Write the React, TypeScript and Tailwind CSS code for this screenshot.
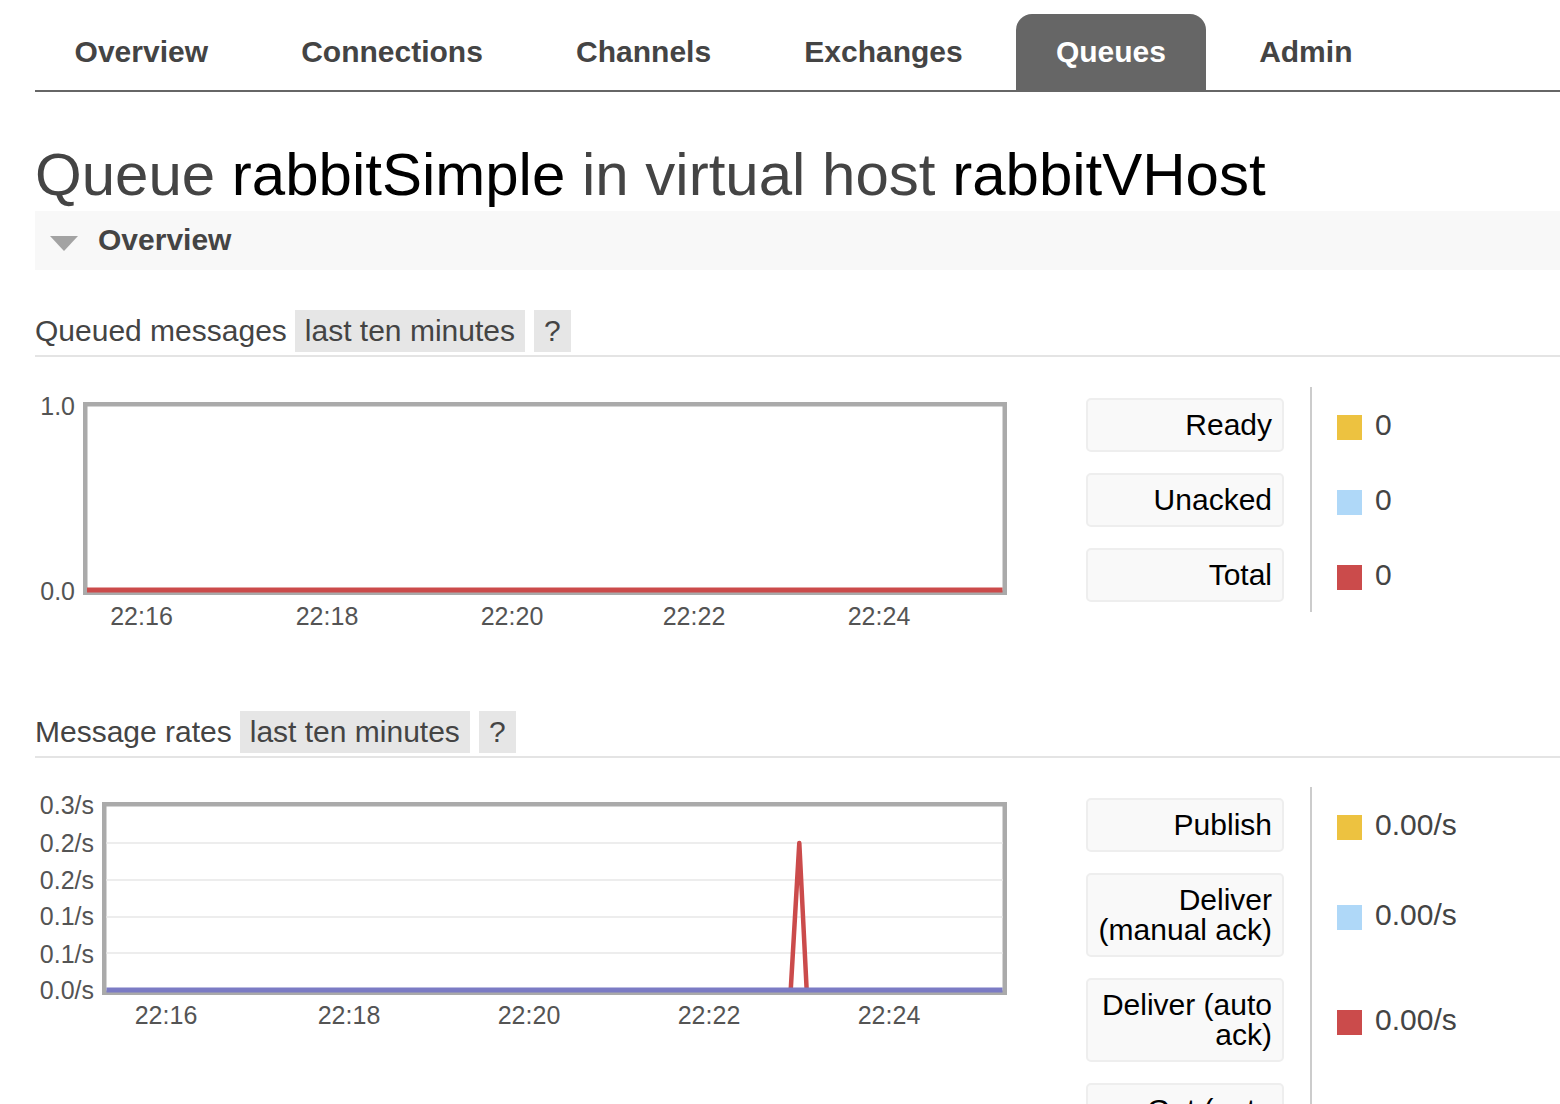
import React from "react";

const tabs = ["Overview", "Connections", "Channels", "Exchanges", "Queues", "Admin"];

interface LegendItem {
  label: string;
  value: string;
  color: string;
}

const queuedLegend: LegendItem[] = [
  { label: "Ready", value: "0", color: "#edc240" },
  { label: "Unacked", value: "0", color: "#afd8f8" },
  { label: "Total", value: "0", color: "#cb4b4b" },
];

const ratesLegend: LegendItem[] = [
  { label: "Publish", value: "0.00/s", color: "#edc240" },
  { label: "Deliver (manual ack)", value: "0.00/s", color: "#afd8f8" },
  { label: "Deliver (auto ack)", value: "0.00/s", color: "#cb4b4b" },
  { label: "Get (auto ack)", value: "0.00/s", color: "#4da74d" },
];

const SectionHeader = ({ title }: { title: string }) => (
  <div className="flex items-center gap-[8px] pb-[2px] border-b-2 border-[#e4e4e4] text-[30px] text-[#444]">
    <span>{title}</span>
    <span className="h-[42px] flex items-center px-[10px] bg-[#e6e6e6]">last ten minutes</span>
    <span className="h-[42px] flex items-center px-[10px] ml-[1px] bg-[#e6e6e6]">?</span>
  </div>
);

const Legend = ({ items }: { items: LegendItem[] }) => (
  <div className="grid grid-cols-[auto_auto] content-start">
    {items.map((it) => (
      <React.Fragment key={it.label}>
        <div className="py-[10.5px] pr-[26px] border-r-2 border-[#ccc]">
          <div className="w-[198px] rounded-[5px] border-2 border-[#eeeeee] bg-[#f9f9f9] px-[10px] py-[10px] text-right text-[30px] leading-[30px] text-black">
            {it.label}
          </div>
        </div>
        <div className="pl-[25px] flex items-center">
          <span className="w-[25px] h-[25px] mt-[5px] mr-[13px]" style={{ background: it.color }} />
          <span className="text-[30px] leading-[30px] text-[#444]">{it.value}</span>
        </div>
      </React.Fragment>
    ))}
  </div>
);

const labelFont = { fontFamily: "'Liberation Sans', Arial, sans-serif", fontSize: 25, fill: "#545454" };

const QueuedChart = () => {
  const xs = [
    { t: "22:16", x: 106.5 },
    { t: "22:18", x: 292 },
    { t: "22:20", x: 477 },
    { t: "22:22", x: 659 },
    { t: "22:24", x: 844 },
  ];
  return (
    <svg width="1000" height="245" className="shrink-0">
      <rect x="50.25" y="17.25" width="919.5" height="188.5" fill="#fff" stroke="#aaa" strokeWidth="4.5" />
      <line x1="52" y1="203" x2="967.5" y2="203" stroke="#cb4b4b" strokeWidth="5" />
      <text x="40" y="28" textAnchor="end" style={labelFont}>1.0</text>
      <text x="40" y="213" textAnchor="end" style={labelFont}>0.0</text>
      {xs.map((l) => (
        <text key={l.t} x={l.x} y="238" textAnchor="middle" style={labelFont}>
          {l.t}
        </text>
      ))}
    </svg>
  );
};

const RatesChart = () => {
  const xs = [
    { t: "22:16", x: 131 },
    { t: "22:18", x: 314 },
    { t: "22:20", x: 494 },
    { t: "22:22", x: 674 },
    { t: "22:24", x: 854 },
  ];
  const ys = [
    { t: "0.3/s", y: 18 },
    { t: "0.2/s", y: 56 },
    { t: "0.2/s", y: 93 },
    { t: "0.1/s", y: 129 },
    { t: "0.1/s", y: 167 },
    { t: "0.0/s", y: 203 },
  ];
  return (
    <svg width="1000" height="245" className="shrink-0">
      <rect x="69.25" y="17.25" width="900.5" height="188.5" fill="#fff" stroke="#aaa" strokeWidth="4.5" />
      {[56, 93, 130, 166].map((y) => (
        <line key={y} x1="71.5" y1={y} x2="967.5" y2={y} stroke="#ededed" strokeWidth="2" />
      ))}
      <polyline
        points="755.7,203.5 764.3,56 771.7,203.5"
        fill="none"
        stroke="#cb4b4b"
        strokeWidth="4.5"
        strokeLinejoin="round"
      />
      <line x1="71.5" y1="203" x2="967.5" y2="203" stroke="#7b7bc4" strokeWidth="5" />
      {ys.map((l, i) => (
        <text key={i} x="59" y={l.y + 9} textAnchor="end" style={labelFont}>
          {l.t}
        </text>
      ))}
      {xs.map((l) => (
        <text key={l.t} x={l.x} y="237" textAnchor="middle" style={labelFont}>
          {l.t}
        </text>
      ))}
    </svg>
  );
};

export default function App() {
  return (
    <div className="h-screen overflow-hidden bg-white pl-[35px] font-['Liberation_Sans',Arial,sans-serif]">
      {/* Tabs */}
      <div className="mt-[14px] flex gap-[14px] border-b-2 border-[#666]">
        {tabs.map((t) => (
          <div
            key={t}
            className={
              t === "Queues"
                ? "h-[76px] px-[39.6px] pb-[2px] flex items-center text-[30px] font-bold text-white bg-[#666] rounded-t-[16px]"
                : "h-[76px] px-[39.6px] pb-[2px] flex items-center text-[30px] font-bold text-[#444]"
            }
          >
            {t}
          </div>
        ))}
      </div>

      {/* Title */}
      <h1 className="mt-[53px] text-[60px] leading-[60px] text-[#444] whitespace-nowrap">
        Queue <span className="text-black">rabbitSimple</span> in virtual host{" "}
        <span className="text-black">rabbitVHost</span>
      </h1>

      {/* Overview collapsible header */}
      <div className="mt-[6px] h-[59px] pb-[2px] bg-[#f8f8f8] flex items-center">
        <svg width="28" height="15" className="ml-[15px] mt-[8px]">
          <polygon points="0,0 28,0 14,15" fill="#a3a3a3" />
        </svg>
        <span className="ml-[20px] text-[30px] font-bold text-[#444]">Overview</span>
      </div>

      {/* Queued messages */}
      <div className="mt-[38px]">
        <SectionHeader title="Queued messages" />
        <div className="mt-[30px] flex items-start">
          <QueuedChart />
          <div className="ml-[51px]">
            <Legend items={queuedLegend} />
          </div>
        </div>
      </div>

      {/* Message rates */}
      <div className="mt-[77px]">
        <SectionHeader title="Message rates" />
        <div className="mt-[29px] flex items-start">
          <RatesChart />
          <div className="ml-[51px]">
            <Legend items={ratesLegend} />
          </div>
        </div>
      </div>
    </div>
  );
}
